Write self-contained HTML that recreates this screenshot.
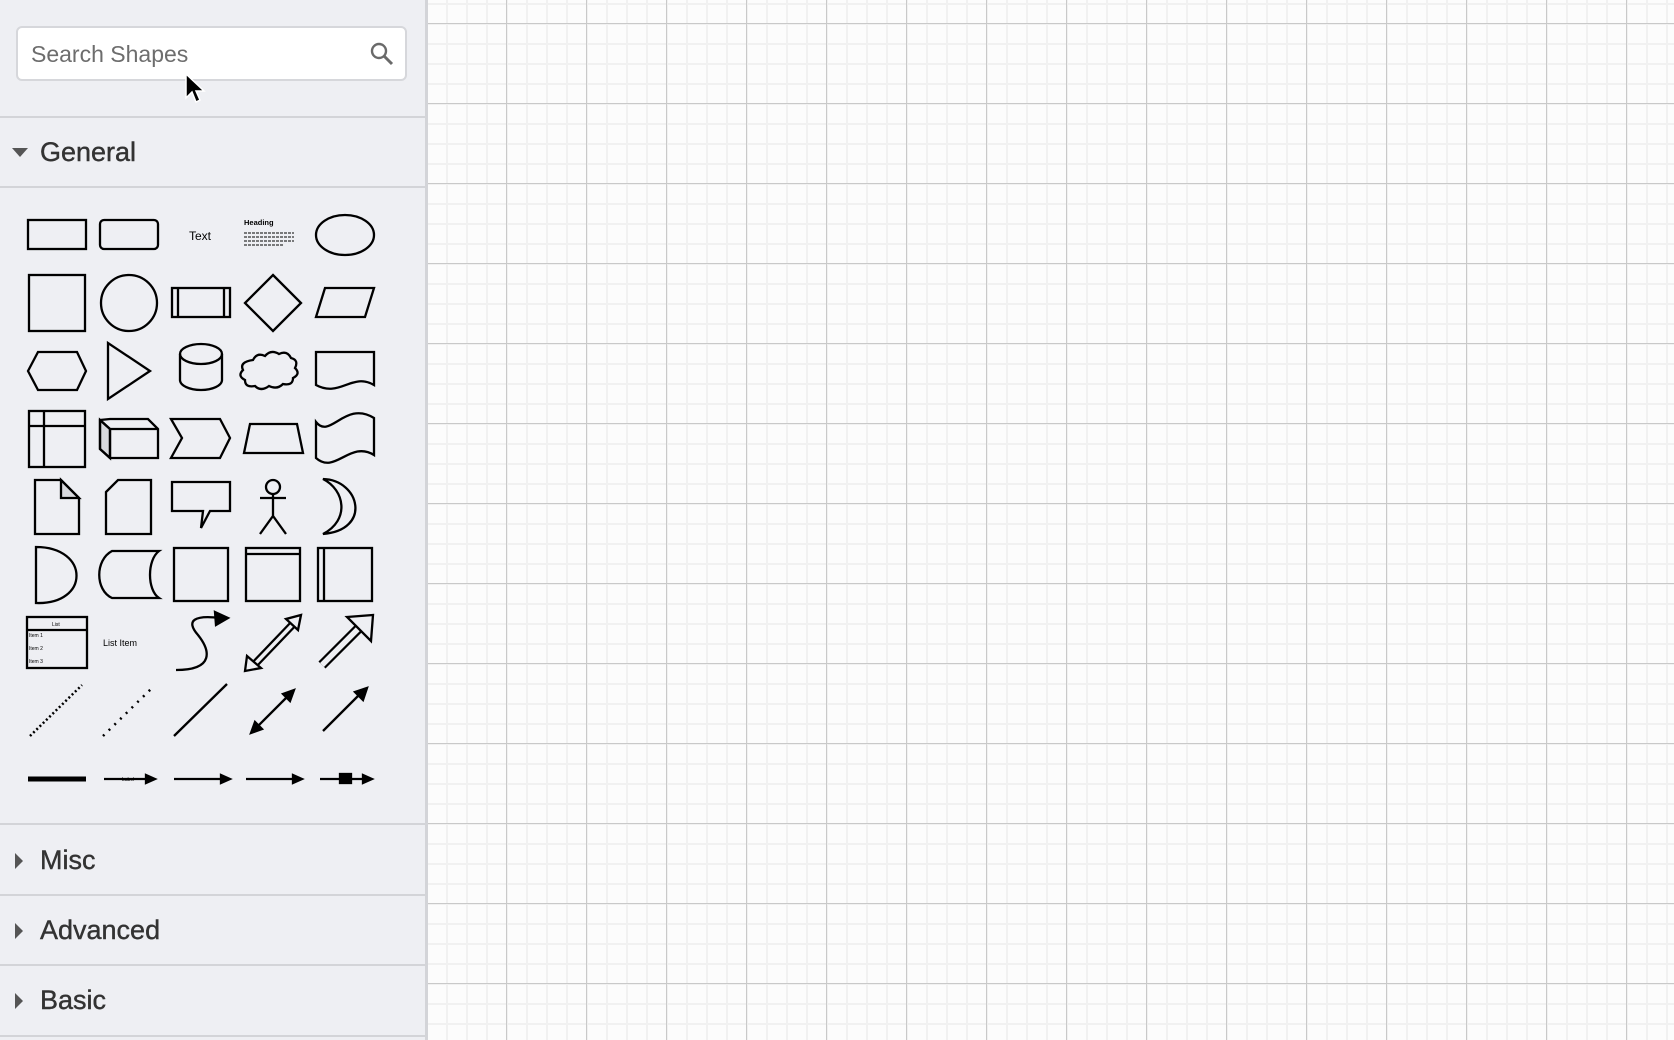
<!DOCTYPE html>
<html><head><meta charset="utf-8"><style>
html,body{margin:0;padding:0;width:1674px;height:1040px;overflow:hidden;font-family:"Liberation Sans",Helvetica,Arial,sans-serif;}
#side{position:absolute;left:0;top:0;width:425px;height:1040px;background:#eeeff3;border-right:3px solid #d3d4d8;}
#canvas{position:absolute;left:428px;top:0;width:1246px;height:1040px;background-color:#fcfcfc;
background-image:
linear-gradient(to right,#c9c9c9 1px,transparent 1px),
linear-gradient(to bottom,#c9c9c9 1px,transparent 1px),
linear-gradient(to right,#f1f1f1 2px,transparent 2px),
linear-gradient(to bottom,#f1f1f1 2px,transparent 2px);
background-size:80px 80px,80px 80px,20px 20px,20px 20px;
background-position:-2px 23px,-2px 23px,-2px 3px,-2px 3px;}
.search{position:absolute;left:16px;top:26px;width:391px;height:55px;background:#fff;border:2px solid #d6d7db;border-radius:6px;box-sizing:border-box;}
.search span{position:absolute;left:13px;top:13px;font-size:23px;color:#6d6d6d;}
.sep{position:absolute;left:0;width:425px;height:2px;background:#d3d4d8;}
.hdr{position:absolute;left:40px;font-size:27px;color:#333;-webkit-text-stroke:0.4px #333;}
.tri{position:absolute;}
</style></head><body>
<div id="side">
<div class="search"><span>Search Shapes</span>
<svg style="position:absolute;right:10px;top:13px" width="26" height="26" viewBox="0 0 26 26"><circle cx="10" cy="10" r="7" fill="none" stroke="#6a6a6a" stroke-width="2.4"/><path d="M15 15 L23 23" stroke="#6a6a6a" stroke-width="3"/></svg></div>
<svg style="position:absolute;left:184px;top:72px" width="26" height="36" viewBox="0 0 26 36"><path d="M2 2 L2 26 L8 20 L12 30 L16 28 L12 19 L20 19 Z" fill="#000" stroke="#fff" stroke-width="1.5"/></svg>
<div class="sep" style="top:116px"></div>
<svg class="tri" style="left:12px;top:148px" width="16" height="10"><path d="M0 0 L16 0 L8 9Z" fill="#555"/></svg>
<div class="hdr" style="top:137px">General</div>
<div class="sep" style="top:186px"></div>
<svg style="position:absolute;left:0;top:0" width="425" height="820" viewBox="0 0 425 820" fill="none" stroke="#000" stroke-width="2.3">
<rect x="28" y="220" width="58" height="29"/>
<rect x="100" y="220" width="58" height="29" rx="4"/>
<text x="189" y="240" font-size="12" fill="#000" stroke="none">Text</text>
<text x="244" y="225" font-size="7.5" font-weight="bold" fill="#000" stroke="none">Heading</text>
<g stroke-width="1.2"><path d="M244 233h50M244 237h50M244 241h50M244 245h40" stroke="#333" stroke-dasharray="3 1"/></g>
<ellipse cx="345" cy="235" rx="29" ry="20"/>
<rect x="29" y="275" width="56" height="56"/>
<circle cx="129" cy="303" r="28"/>
<rect x="172" y="288" width="58" height="29"/><path d="M178 288v29M224 288v29"/>
<path d="M273 275 L301 303 L273 331 L245 303Z"/>
<path d="M316 317 L325 288 L374 288 L365 317Z"/>
<path d="M28 371 L38 352 L77 352 L86 371 L77 390 L38 390Z"/>
<path d="M108 343 L108 399 L150 371Z"/>
<path d="M180 354 v26 a21 10 0 0 0 42 0 v-26"/><ellipse cx="201" cy="354" rx="21" ry="10"/>
<path d="M253 360 q4 -8 12 -4 q6 -7 14 -2 q8 -4 12 4 q8 2 4 10 q6 6 -2 10 q0 8 -10 6 q-6 6 -14 2 q-8 6 -14 0 q-10 2 -10 -6 q-8 -4 -2 -10 q-4 -8 10 -10z"/>
<path d="M316 352 H374 V385 C352 372 340 398 316 385Z"/>
<rect x="29" y="411" width="56" height="56"/><path d="M44 411v56M29 426h56"/>
<path d="M100 420 L110 429 V458 L100 449Z" fill="#d8d9dd"/>
<path d="M100 420 L110 419 H148 L158 429 V458 H110 L100 449Z"/><path d="M100 420 L110 429 H158 M110 429 V458"/>
<path d="M171 419 H220 L230 438 L220 458 H171 L182 438Z"/>
<path d="M244 453 L250 424 H297 L303 453Z"/>
<path d="M316 422 C330 440 345 400 374 418 V455 C350 440 335 475 316 458Z"/>
<path d="M35 480 H61 L79 498 V534 H35Z"/><path d="M61 480 L79 498 H61Z" fill="#d8d9dd"/>
<path d="M118 480 H151 V534 H106 V492Z"/>
<path d="M172 482 H230 V511 H210 L201 528 L203 511 H172Z"/>
<circle cx="273" cy="487" r="7"/><path d="M273 494 V516 M260 498 H286 M260 534 L273 516 L286 534"/>
<path d="M323 479 C360 480 372 530 323 534 C350 520 345 490 323 479Z"/>
<path d="M36 547 C90 547 90 605 36 603Z"/>
<path d="M112 551 H159 C147 560 147 590 159 598 H112 C95 590 95 560 112 551Z"/>
<rect x="174" y="548" width="54" height="53"/>
<rect x="246" y="548" width="54" height="53"/><path d="M246 554 H300"/>
<rect x="318" y="548" width="54" height="53"/><path d="M324 548 V601"/>
<rect x="27" y="617" width="60" height="51"/><path d="M27 630 H87"/>
<text x="52" y="626" font-size="5" fill="#000" stroke="none">List</text>
<text x="29" y="637" font-size="5" fill="#000" stroke="none">Item 1</text>
<text x="29" y="650" font-size="5" fill="#000" stroke="none">Item 2</text>
<text x="29" y="663" font-size="5" fill="#000" stroke="none">Item 3</text>
<text x="103" y="646" font-size="9" fill="#000" stroke="none">List Item</text>
<path d="M176 670 C215 670 210 650 198 635 C185 620 195 615 220 618"/><path d="M215 612 L228 618 L216 625Z" fill="#000"/>
<path d="M252 667 L297 620" stroke-width="8"/><path d="M252 667 L297 620" stroke="#eeeff3" stroke-width="3.5"/>
<path d="M245 671 L247 656 L261 668Z M301 615 L298 630 L286 619Z" fill="#eeeff3"/>
<path d="M322 665 L362 625" stroke-width="10"/><path d="M322 665 L362 625" stroke="#eeeff3" stroke-width="5.5"/><path d="M347 617 L373 615 L371 641Z" fill="#eeeff3"/>
<path d="M30 736 L82 685" stroke-width="2.5" stroke-dasharray="2 2.5"/>
<path d="M103 736 L152 688" stroke-width="2.5" stroke-dasharray="2 6"/>
<path d="M174 736 L227 684"/>
<path d="M253 731 L292 692"/><path d="M251 733 L255 722 L262 729Z M294 690 L290 701 L283 694Z" fill="#000"/>
<path d="M323 731 L363 691"/><path d="M367 688 L363 700 L355 692Z" fill="#000"/>
<path d="M28 779 H86" stroke-width="5"/>
<path d="M104 779 H150"/><path d="M155 779 L146 775 V783Z" fill="#000"/>
<text x="122" y="781" font-size="5" fill="#000" stroke="none">Label</text>
<path d="M174 779 H226"/><path d="M230 779 L221 775 V783Z" fill="#000"/>
<path d="M246 779 H298"/><path d="M302 779 L293 775 V783Z" fill="#000"/>
<path d="M320 779 H368"/><path d="M372 779 L363 775 V783Z" fill="#000"/><rect x="340" y="774" width="11" height="9" fill="#000"/>
</svg>
<div class="sep" style="top:823px"></div>
<svg class="tri" style="left:15px;top:853px" width="10" height="16"><path d="M0 0 L8 8 L0 16Z" fill="#555"/></svg>
<div class="hdr" style="top:845px">Misc</div>
<div class="sep" style="top:894px"></div>
<svg class="tri" style="left:15px;top:923px" width="10" height="16"><path d="M0 0 L8 8 L0 16Z" fill="#555"/></svg>
<div class="hdr" style="top:915px">Advanced</div>
<div class="sep" style="top:964px"></div>
<svg class="tri" style="left:15px;top:993px" width="10" height="16"><path d="M0 0 L8 8 L0 16Z" fill="#555"/></svg>
<div class="hdr" style="top:985px">Basic</div>
<div class="sep" style="top:1035px"></div>
</div>
<div id="canvas"></div>
</body></html>
